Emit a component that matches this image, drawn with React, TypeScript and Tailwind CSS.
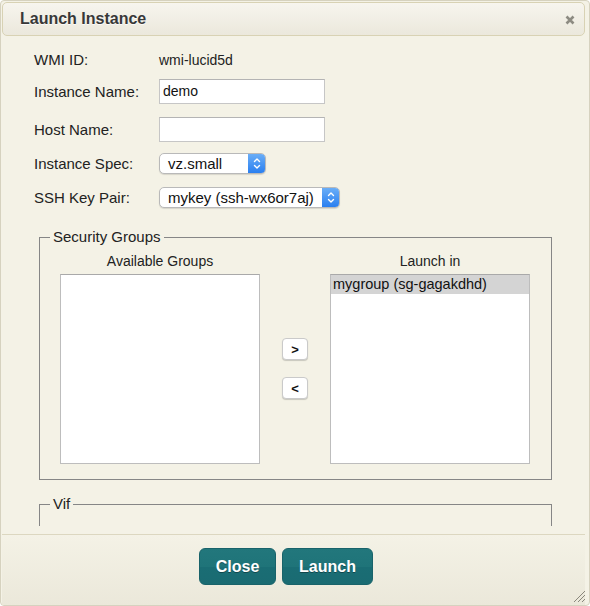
import React from "react";

function SelectBox({ value, width }: { value: string; width: string }) {
  return (
    <div
      className={`${width} h-[21px] flex items-stretch rounded-[5px] border border-[#b9b9b9] bg-white shadow-[0_1px_1px_rgba(0,0,0,0.12)] overflow-hidden`}
    >
      <div className="flex-1 flex items-center pl-[8px] text-[15px] text-[#111] leading-none">{value}</div>
      <div className="w-[17px] flex items-center justify-center bg-[linear-gradient(to_bottom,#6aaef7,#2a7ff0)]">
        <svg width="8" height="13" viewBox="0 0 8 13" fill="none" stroke="white" strokeWidth="1.4" strokeLinecap="round" strokeLinejoin="round">
          <path d="M1.5 4.5 L4 2 L6.5 4.5" />
          <path d="M1.5 8.5 L4 11 L6.5 8.5" />
        </svg>
      </div>
    </div>
  );
}

function Row({ label, children, className }: { label: string; children: React.ReactNode; className: string }) {
  return (
    <div className={`flex items-center ${className}`}>
      <div className="w-[125px] text-[15px] leading-[18px]">{label}</div>
      {children}
    </div>
  );
}

export default function App() {
  return (
    <div className="w-[590px] h-[606px] bg-[#f4f2e6] border border-[#d6d2bf] rounded-[4px] flex flex-col overflow-hidden relative font-['Liberation_Sans',Arial,sans-serif] text-[#222]">
      {/* Title bar */}
      <div className="mt-[1px] ml-[1px] mr-[4px] h-[34px] shrink-0 rounded-[5px] border border-[#d8d2b4] bg-[linear-gradient(to_bottom,#f7f5ee,#ebe8dc)] flex items-center justify-between pl-[17px] pr-[9px]">
        <span className="text-[16px] font-bold text-[#383838] [text-shadow:0_1px_0_rgba(255,255,255,0.8)]">Launch Instance</span>
        <svg width="10" height="10" viewBox="0 0 10 10" className="mt-[2px]">
          <path d="M1.5 1.5 L8.5 8.5 M8.5 1.5 L1.5 8.5" stroke="#8d8b82" strokeWidth="2.6" strokeLinecap="butt" />
        </svg>
      </div>

      {/* Content */}
      <div className="h-[490px] shrink-0 overflow-hidden">
        <div className="pl-[33px] pt-[14px]">
          <Row label="WMI ID:" className="h-[20px]">
            <span className="text-[14px]">wmi-lucid5d</span>
          </Row>
          <Row label="Instance Name:" className="mt-[9px] h-[25px]">
            <div className="w-[166px] h-[25px] bg-white border border-[#c6c6c6] border-t-[#b4b4b4] pl-[3px] flex items-center text-[14px] text-[#111]">
              demo
            </div>
          </Row>
          <Row label="Host Name:" className="mt-[13px] h-[25px]">
            <div className="w-[166px] h-[25px] bg-white border border-[#c6c6c6] border-t-[#b4b4b4]" />
          </Row>
          <Row label="Instance Spec:" className="mt-[11px] h-[21px]">
            <SelectBox value="vz.small" width="w-[107px]" />
          </Row>
          <Row label="SSH Key Pair:" className="mt-[13px] h-[21px]">
            <SelectBox value="mykey (ssh-wx6or7aj)" width="w-[181px]" />
          </Row>
        </div>

        {/* Security Groups */}
        <fieldset className="ml-[38px] mt-[20px] w-[513px] border border-[#868686]">
          <legend className="ml-[10px] px-[3px] text-[15px] leading-[18px]">Security Groups</legend>
          <div className="pt-[6px] pl-[20px] pb-[15px] flex gap-[22px]">
            <div className="w-[200px] flex flex-col">
              <div className="h-[18px] mb-[4px] text-center text-[14px] leading-[18px]">Available Groups</div>
              <div className="h-[190px] bg-white border border-[#bdbdbd] border-t-[#a9a9a9]" />
            </div>
            <div className="w-[26px] flex flex-col justify-center gap-[17px] pt-[21px]">
              <button className="w-[26px] h-[22px] bg-white rounded-[4px] border border-[#cacaca] shadow-[0_1px_1px_rgba(0,0,0,0.18)] text-[13px] font-bold leading-none text-[#111] flex items-center justify-center">
                &gt;
              </button>
              <button className="w-[26px] h-[22px] bg-white rounded-[4px] border border-[#cacaca] shadow-[0_1px_1px_rgba(0,0,0,0.18)] text-[13px] font-bold leading-none text-[#111] flex items-center justify-center">
                &lt;
              </button>
            </div>
            <div className="w-[200px] flex flex-col">
              <div className="h-[18px] mb-[4px] text-center text-[14px] leading-[18px]">Launch in</div>
              <div className="h-[190px] bg-white border border-[#bdbdbd] border-t-[#a9a9a9]">
                <div className="h-[19px] bg-[#d4d4d4] pl-[2px] text-[14.5px] leading-[19px] text-[#111]">mygroup (sg-gagakdhd)</div>
              </div>
            </div>
          </div>
        </fieldset>

        {/* Vif */}
        <fieldset className="ml-[38px] mt-[15px] w-[513px] border border-[#868686]">
          <legend className="ml-[10px] px-[3px] text-[15px] leading-[18px]">Vif</legend>
          <div className="h-[60px]" />
        </fieldset>
      </div>

      {/* Footer */}
      <div className="mt-[8px] ml-[1px] mr-[4px] flex-1 border-t border-[#dcd7c0] bg-[linear-gradient(to_bottom,#f4f2e6,#ebe8da)]">
        <div className="pt-[13px] pl-[197px] flex gap-[6px]">
          <button className="w-[77px] h-[37px] rounded-[6px] border border-[#19636a] bg-[linear-gradient(to_bottom,#22777c_0%,#1f7479_50%,#1a6d74_52%,#1a6b72_100%)] text-white font-bold text-[16px] [text-shadow:0_1px_0_rgba(0,0,0,0.35)]">
            Close
          </button>
          <button className="w-[91px] h-[37px] rounded-[6px] border border-[#19636a] bg-[linear-gradient(to_bottom,#22777c_0%,#1f7479_50%,#1a6d74_52%,#1a6b72_100%)] text-white font-bold text-[16px] [text-shadow:0_1px_0_rgba(0,0,0,0.35)]">
            Launch
          </button>
        </div>
      </div>

      {/* Resize grip */}
      <svg className="absolute right-[3px] bottom-[2px]" width="13" height="13" viewBox="0 0 13 13">
        <path d="M12 1 L1 12 M12 5 L5 12 M12 9 L9 12" stroke="#8a877c" strokeWidth="1" />
      </svg>
    </div>
  );
}
